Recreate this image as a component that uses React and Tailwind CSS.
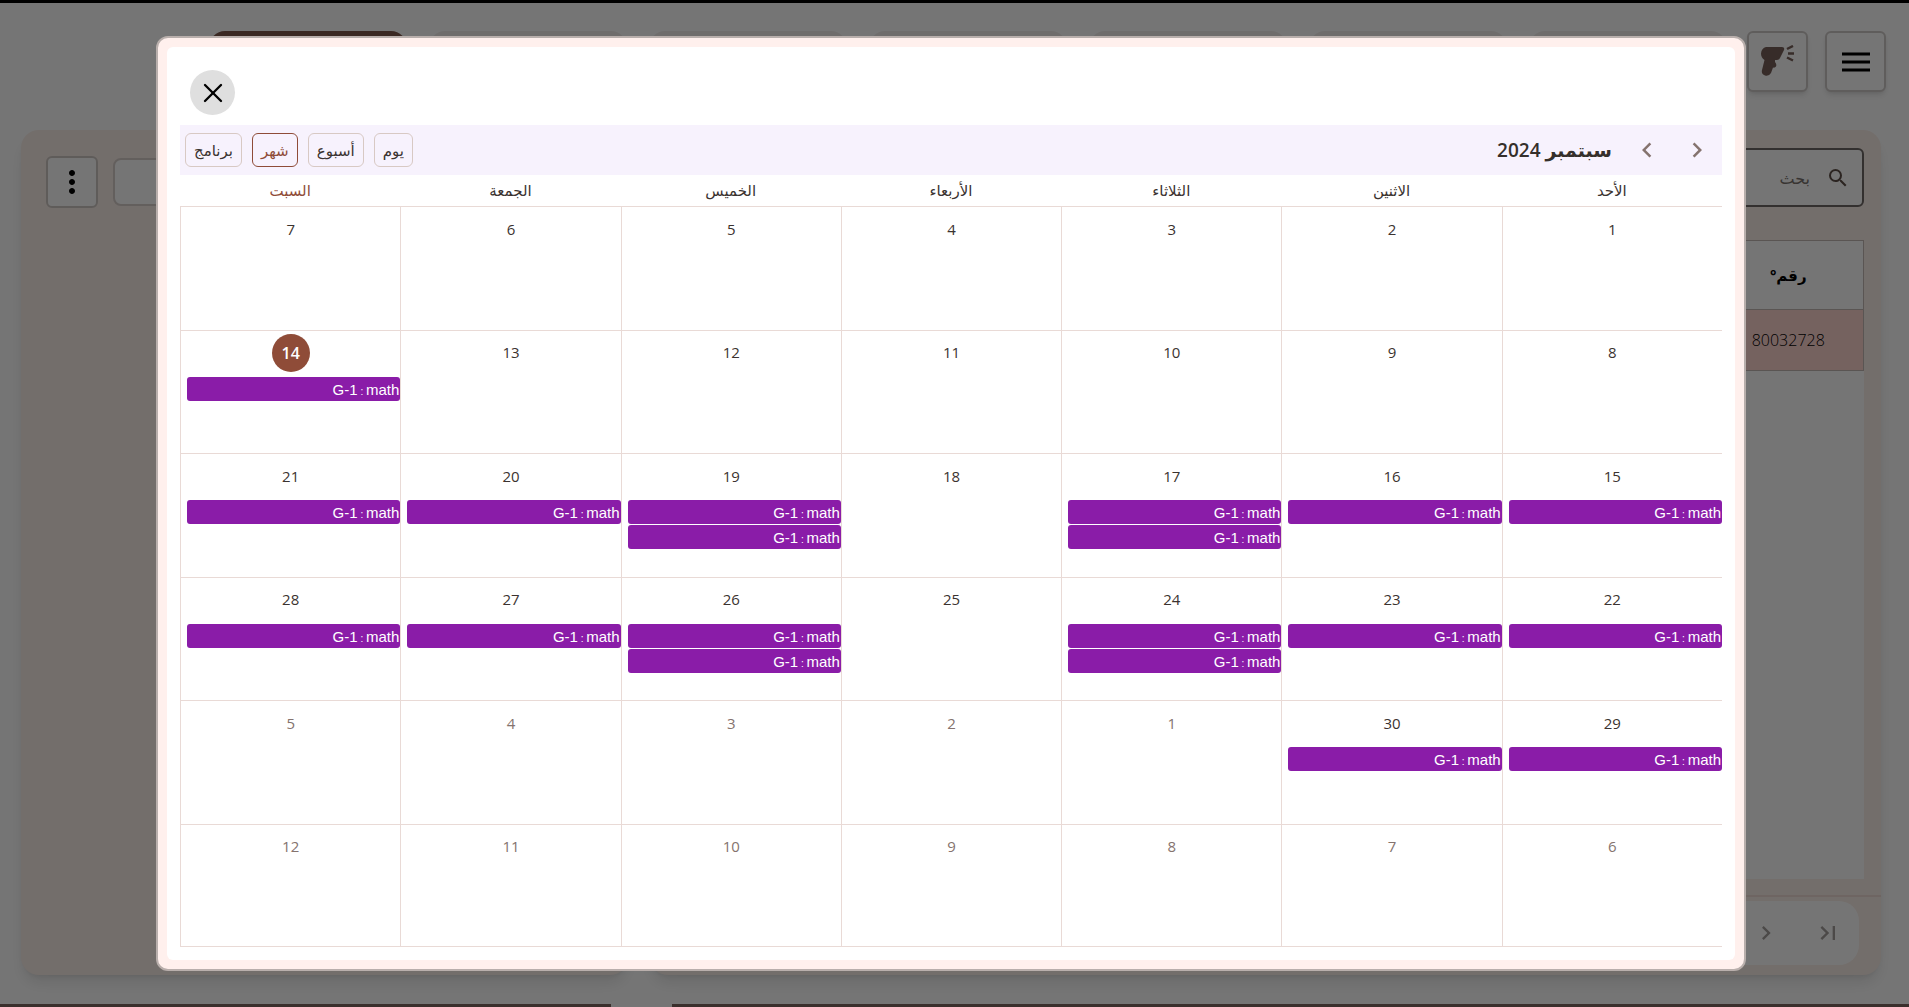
import { useState } from 'react';
import { MdChevronLeft, MdChevronRight, MdLastPage, MdMoreVert, MdSearch } from 'react-icons/md';
import { X } from 'lucide-react';
import clsx from 'clsx';

const DAYS = ['الأحد', 'الاثنين', 'الثلاثاء', 'الأربعاء', 'الخميس', 'الجمعة', 'السبت'];
const TODAY = 14;

const VIEWS = [
  { id: 'day', label: 'يوم' },
  { id: 'week', label: 'أسبوع' },
  { id: 'month', label: 'شهر' },
  { id: 'agenda', label: 'برنامج' },
];

// Number of sessions per day of September
const SESSIONS = {
  14: 1, 15: 1, 16: 1, 17: 2, 19: 2, 20: 1, 21: 1,
  22: 1, 23: 1, 24: 2, 26: 2, 27: 1, 28: 1, 29: 1, 30: 1,
};

// Six weeks, starting on Sunday, September 1st
const WEEKS = Array.from({ length: 6 }, (_, week) =>
  Array.from({ length: 7 }, (_, day) => {
    const n = week * 7 + day + 1;
    return n <= 30 ? { date: n, inMonth: true } : { date: n - 30, inMonth: false };
  })
);

const MenuIcon = () => (
  <svg viewBox="0 0 28 20" className="h-5 w-7" aria-hidden="true">
    <path d="M0 2 H28 M0 10 H28 M0 18 H28" stroke="currentColor" strokeWidth="3" />
  </svg>
);

const ScannerIcon = () => (
  <svg viewBox="0 0 36 34" className="h-[34px] w-9" aria-hidden="true">
    <path
      d="M6 2 H22 Q25 2 24 5 L20 13 Q19 15 17 15 H15 V17 Q17 19 16 21.500 Q15 23 13 22.500 L11 28 Q9 31.500 5 30.500 Q1 29 2 25 L4.500 15 Q1 12.500 1 8.500 Q1.500 3 6 2 Z"
      fill="#79615a"
    />
    <path d="M27 4 L33 1 M28 8.500 H34 M27 12.500 L33 15.500" stroke="#79615a" strokeWidth="2.500" fill="none" />
  </svg>
);

const TopBar = () => (
  <header className="flex items-start px-[23px] pt-7">
    <button
      type="button"
      aria-label="القائمة"
      className="flex size-[61px] shrink-0 items-center justify-center rounded-md border-2 border-[#cfcac8] bg-white shadow-md"
    >
      <MenuIcon />
    </button>
    <button
      type="button"
      aria-label="ماسح"
      className="mr-[17px] flex size-[61px] shrink-0 items-center justify-center rounded-md border-2 border-[#cfcac8] bg-white shadow-md"
    >
      <ScannerIcon />
    </button>
    <nav className="mr-5 flex gap-[22px]">
      {[1, 2, 3, 4, 5, 6, 7].map((tab) => (
        <button
          key={tab}
          type="button"
          aria-label={`قسم ${tab}`}
          className={clsx('h-14 w-[198px] shrink-0 rounded-2xl', tab === 7 ? 'bg-[#80594d]' : 'bg-[#f2eeec]')}
        />
      ))}
    </nav>
  </header>
);

const StudentsPanel = () => (
  <section className="flex flex-1 flex-col rounded-[18px] bg-[#fbefe9] shadow-lg">
    <div className="px-[17px] pt-[18px]">
      <label className="flex h-[59px] items-center gap-4 rounded-md border-2 border-[#6f6a68] bg-white px-3">
        <MdSearch className="size-6 shrink-0 text-[#5f5048]" />
        <input
          type="search"
          placeholder="بحث"
          className="w-full bg-transparent text-base outline-none placeholder:text-[#7a726e]"
        />
      </label>
    </div>
    <div className="mx-[17px] mt-[33px] flex-1 bg-white">
      <table className="w-full table-fixed border-collapse border border-[#c4bab6]">
        <thead>
          <tr className="h-[69px] border-b border-[#c4bab6]">
            <th className="w-[150px] text-[15px]">رقم°</th>
            <th />
          </tr>
        </thead>
        <tbody>
          <tr className="h-[61px] bg-[#ffd5cf] text-center text-base font-light">
            <td>80032728</td>
            <td />
          </tr>
        </tbody>
      </table>
    </div>
    <div className="mt-4 border-t-2 border-[#efdcd5] px-[22px] pt-1 pb-[10px]">
      <div className="flex h-16 items-center gap-8 rounded-[20px] bg-white px-4 text-[#a5a09e]">
        <button type="button" aria-label="الصفحة الأخيرة" className="p-px"><MdLastPage className="size-7" /></button>
        <button type="button" aria-label="الصفحة التالية" className="p-px"><MdChevronRight className="size-7" /></button>
      </div>
    </div>
  </section>
);

const SidePanel = () => (
  <section className="flex w-[calc(33%-7px)] items-start justify-end gap-[15px] rounded-[18px] bg-[#fbefe9] px-[25px] pt-[26px] shadow-lg">
    <input type="text" aria-label="تصفية" className="mt-0.5 h-12 w-80 rounded-lg border-2 border-[#d8cfcb] bg-white" />
    <button
      type="button"
      aria-label="المزيد"
      className="flex size-[52px] items-center justify-center rounded-md border-2 border-[#d0c8c4] bg-white"
    >
      <MdMoreVert className="size-9" />
    </button>
  </section>
);

const Session = () => (
  <div dir="ltr" className="h-6 rounded-[3px] bg-[#8a1ca8] pr-px text-right font-['Liberation_Sans',sans-serif] text-[15px] leading-[25px] whitespace-pre text-white">
    G-1<span className="text-[10px]"> : </span>math
  </div>
);

const DayCell = ({ date, inMonth, last }) => {
  const isToday = inMonth && date === TODAY;
  const sessions = (inMonth && SESSIONS[date]) || 0;

  return (
    <td className={clsx('border-t border-l border-[#e9dad6] p-0 pt-[3px] align-top', last && 'border-b')}>
      <div
        className={clsx(
          'mx-auto flex size-[38px] items-center justify-center rounded-full',
          isToday && 'bg-[#8f4c38] text-base font-semibold text-white',
          !isToday && (inMonth ? 'text-[15px] text-[#3b3330]' : 'text-[15px] text-[#85736e]')
        )}
      >
        {date}
      </div>
      <div className="mt-[5px] ml-1.5 flex flex-col gap-px">
        {Array.from({ length: sessions }, (_, i) => (
          <Session key={i} />
        ))}
      </div>
    </td>
  );
};

const CalendarDialog = () => {
  const [view, setView] = useState('month');

  return (
    <div
      role="dialog"
      aria-label="سبتمبر 2024"
      className="w-full self-start rounded-xl border-2 border-[#b9afac] bg-[#fff0ed] p-[9px]"
    >
      <div className="rounded-md bg-white px-[13px] pt-[23px] pb-[13px]">
        <div className="flex justify-end px-[10px]">
          <button type="button" aria-label="إغلاق" className="flex size-[45px] items-center justify-center rounded-full bg-[#dfdfdf] text-black">
            <X size={32} strokeWidth={1.75} />
          </button>
        </div>

        <div className="mt-[10px] flex h-[50px] items-center bg-[#f7f2fd] pr-[10px] pl-[5px]">
          <button type="button" aria-label="الشهر السابق" className="text-[#85736e]"><MdChevronRight className="size-[30px]" /></button>
          <button type="button" aria-label="الشهر التالي" className="mr-5 text-[#85736e]"><MdChevronLeft className="size-[30px]" /></button>
          <h2 className="mr-5 text-[19px] font-semibold text-[#352f2b]">سبتمبر 2024</h2>
          <div className="mr-auto flex gap-[10px]">
            {VIEWS.map(({ id, label }) => (
              <button
                key={id}
                type="button"
                onClick={() => setView(id)}
                className={clsx(
                  'h-[34px] rounded-md border px-2 text-[15px]',
                  view === id ? 'border-[#8f4c38] text-[#8f4c38]' : 'border-[#d8c9c4] text-[#3b3330]'
                )}
              >
                {label}
              </button>
            ))}
          </div>
        </div>

        <table className="h-[772px] w-full table-fixed border-separate border-spacing-0">
          <thead>
            <tr className="h-[31px]">
              {DAYS.map((day, i) => (
                <th key={day} className={clsx('h-[31px] p-0 text-[15px] font-normal', i === 6 ? 'text-[#8f4c38]' : 'text-[#3b3330]')}>
                  {day}
                </th>
              ))}
            </tr>
          </thead>
          <tbody>
            {WEEKS.map((week, w) => (
              <tr key={w} className="h-[16%]">
                {week.map((day, d) => (
                  <DayCell key={d} {...day} last={w === 5} />
                ))}
              </tr>
            ))}
          </tbody>
        </table>
      </div>
    </div>
  );
};

const App = () => (
  <div
    dir="rtl"
    className="relative flex min-h-screen flex-col overflow-hidden border-t-[3px] border-black bg-white font-['Open_Sans','DejaVu_Sans',sans-serif] text-black"
  >
    <TopBar />
    <main className="mt-[38px] mb-[29px] flex flex-1 gap-[22px] pr-7 pl-[21px]">
      <StudentsPanel />
      <SidePanel />
    </main>
    <footer className="flex h-[3px]">
      <div className="flex-1 bg-[#7e6660]" />
      <div className="w-[61px]" />
      <div className="w-[32%] bg-[#7e6660]" />
    </footer>

    <div className="absolute inset-0 flex bg-black/54 pt-[33px] pr-[163px] pl-[156px]">
      <CalendarDialog />
    </div>
  </div>
);

export default App;
